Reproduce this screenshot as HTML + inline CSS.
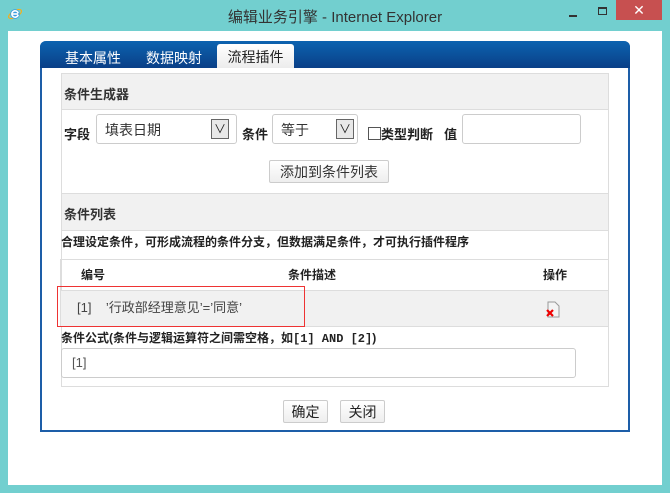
<!DOCTYPE html>
<html><head><meta charset="utf-8"><style>
*{margin:0;padding:0;box-sizing:border-box}
body{width:670px;height:493px;background:#72cfcf;position:relative;overflow:hidden;font-family:"Liberation Sans","Noto Sans CJK SC",sans-serif;font-size:12px;color:#222}
.a{position:absolute}
.title{left:0;top:6px;width:670px;text-align:center;font-size:15px;color:#333}
.client{left:8px;top:31px;width:654px;height:454px;background:#fff}
.panel{left:40px;top:41px;width:590px;height:391px;border:2px solid #1d5ea8;border-top:none;border-radius:6px 6px 0 0;background:#fff}
.hdr{left:40px;top:41px;width:590px;height:27px;background:linear-gradient(#0c63b0,#0a3f87);border-radius:6px 6px 0 0}
.tab{color:#fff;font-size:14px;top:48px}
.atab{left:217px;top:44px;width:77px;height:24px;background:linear-gradient(#fff,#ececec);border-radius:3px 3px 0 0;color:#222;font-size:14px;text-align:center;line-height:26px}
.box{left:61px;top:73px;width:548px;height:314px;border:1px solid #ddd}
.gray{background:#f1f1f1}
.b{font-weight:bold}
.sel{border:1px solid #ccc;border-radius:3px;background:#fff;height:30px}
.arr{position:absolute;top:4px;width:18px;height:20px;border:1px solid #666;background:#e8e8e8;font-size:12px;text-align:center;line-height:18px}
.btn{border:1px solid #ccc;border-radius:2px;background:linear-gradient(#fff,#eee);font-size:14px;text-align:center}
.m{font-family:"Liberation Mono",monospace}
</style></head><body>
<svg class="a" style="left:7px;top:6px" width="16" height="16" viewBox="0 0 20 18"><ellipse cx="10" cy="9" rx="9" ry="4" fill="none" stroke="#f0b020" stroke-width="1.5" transform="rotate(-30 10 9)"/><circle cx="10" cy="9" r="6" fill="#3a9be0"/><rect x="6" y="8" width="8" height="2" fill="#fff"/><path d="M14 10a4 4 0 1 1 0-2" fill="none" stroke="#fff" stroke-width="2"/></svg>
<div class="a title">编辑业务引擎 - Internet Explorer</div>
<div class="a" style="left:569px;top:15px;width:8px;height:2px;background:#333"></div>
<div class="a" style="left:598px;top:7px;width:9px;height:8px;border:1px solid #333;border-top-width:2px"></div>
<div class="a" style="left:616px;top:0;width:46px;height:20px;background:#c75050;color:#fff;text-align:center;font-size:14px;line-height:20px">✕</div>
<div class="a client"></div>
<div class="a panel"></div>
<div class="a hdr"></div>
<div class="a tab" style="left:65px">基本属性</div>
<div class="a tab" style="left:146px">数据映射</div>
<div class="a atab">流程插件</div>
<div class="a box"></div>
<div class="a gray" style="left:62px;top:74px;width:546px;height:36px;border-bottom:1px solid #ddd"></div>
<div class="a b" style="left:64px;top:84px;font-size:13px;color:#333">条件生成器</div>
<div class="a b" style="left:64px;top:124px;font-size:13px">字段</div>
<div class="a sel" style="left:96px;top:114px;width:141px"><span class="a" style="left:8px;top:5px;color:#333;font-size:14px">填表日期</span><div class="arr" style="left:114px">∨</div></div>
<div class="a b" style="left:242px;top:124px;font-size:13px">条件</div>
<div class="a sel" style="left:272px;top:114px;width:86px"><span class="a" style="left:8px;top:5px;color:#333;font-size:14px">等于</span><div class="arr" style="left:63px">∨</div></div>
<div class="a" style="left:368px;top:127px;width:13px;height:13px;border:1px solid #555;background:#fff"></div>
<div class="a b" style="left:381px;top:124px;font-size:13px">类型判断</div>
<div class="a b" style="left:444px;top:124px;font-size:13px">值</div>
<div class="a sel" style="left:462px;top:114px;width:119px"></div>
<div class="a btn" style="left:269px;top:160px;width:120px;height:23px;line-height:22px;color:#333">添加到条件列表</div>
<div class="a gray" style="left:62px;top:193px;width:546px;height:38px;border-top:1px solid #ddd;border-bottom:1px solid #ddd"></div>
<div class="a b" style="left:64px;top:204px;font-size:13px;color:#333">条件列表</div>
<div class="a b" style="left:61px;top:233px">合理设定条件，可形成流程的条件分支，但数据满足条件，才可执行插件程序</div>
<div class="a" style="left:60px;top:259px;width:549px;height:68px;border:1px solid #ddd"></div>
<div class="a gray" style="left:61px;top:290px;width:547px;height:36px;border-top:1px solid #ddd"></div>
<div class="a b" style="left:81px;top:266px">编号</div>
<div class="a b" style="left:288px;top:266px">条件描述</div>
<div class="a b" style="left:543px;top:266px">操作</div>
<div class="a" style="left:57px;top:286px;width:248px;height:41px;border:1px solid #e33"></div>
<div class="a" style="left:77px;top:297px;color:#444;font-size:13px">[1]&nbsp;&nbsp;&nbsp;&nbsp;’行政部经理意见’=’同意’</div>
<svg class="a" style="left:545px;top:301px" width="16" height="17" viewBox="0 0 16 17"><path d="M3 1h7l4 4v11H3z" fill="#f4f4f4" stroke="#999"/><path d="M2 9l6 6M8 9l-6 6" stroke="#e00" stroke-width="2.2"/></svg>
<div class="a b" style="left:61px;top:329px">条件公式(条件与逻辑运算符之间需空格，如<span class="m">[1] AND [2]</span>)</div>
<div class="a sel" style="left:61px;top:348px;width:515px;height:30px"><span class="a" style="left:10px;top:6px;color:#555;font-size:13px">[1]</span></div>
<div class="a btn" style="left:283px;top:400px;width:45px;height:23px;line-height:22px">确定</div>
<div class="a btn" style="left:340px;top:400px;width:45px;height:23px;line-height:22px">关闭</div>
</body></html>
